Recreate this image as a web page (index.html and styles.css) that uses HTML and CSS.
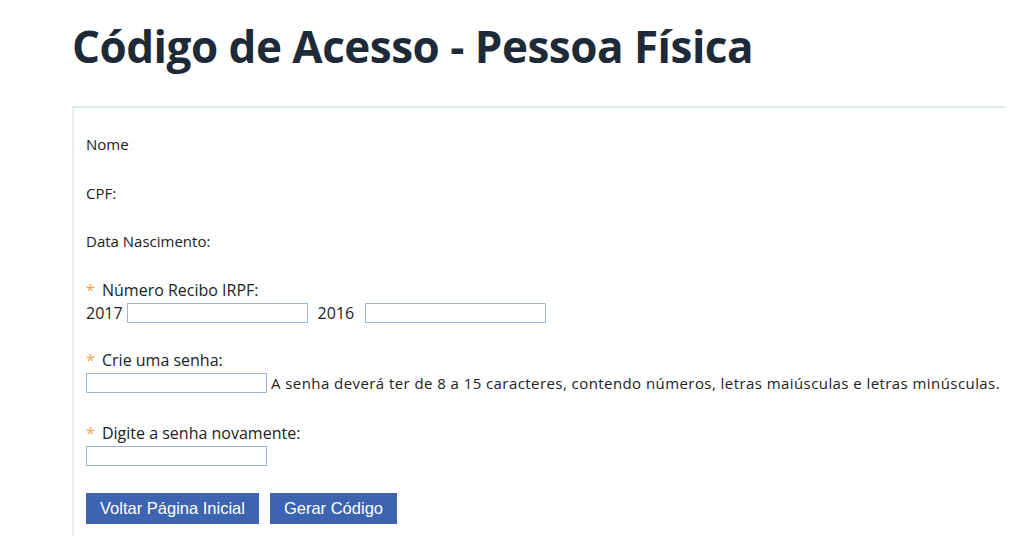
FILE: index.html
```html
<!DOCTYPE html>
<html lang="pt-BR">
<head>
  <meta charset="UTF-8">
  <title>Código de Acesso - Pessoa Física</title>
  <link rel="stylesheet" href="styles.css">
</head>
<body>
  <h1>Código de Acesso - Pessoa Física</h1>

  <form class="painel" id="formCodigo">
    <div class="info">Nome<span class="oculto">:</span></div>
    <div class="info">CPF: <span class="oculto">·</span></div>
    <div class="info">Data Nascimento:</div>

    <div class="campo">
      <label><span class="obrig">*</span> Número Recibo IRPF:</label>
      <div class="linha">
        <span>2017</span>
        <input type="text" id="recibo2017" class="caixa">
        <span class="ano">2016</span>
        <input type="text" id="recibo2016" class="caixa">
      </div>
    </div>

    <div class="campo largo">
      <label><span class="obrig">*</span> Crie uma senha:</label>
      <div class="linha">
        <input type="password" id="senha" class="caixa senha">
        <span class="dica">A senha deverá ter de 8 a 15 caracteres, contendo números, letras maiúsculas e letras minúsculas.</span>
      </div>
    </div>

    <div class="campo">
      <label><span class="obrig">*</span> Digite a senha novamente:</label>
      <div class="linha">
        <input type="password" id="senha2" class="caixa senha">
      </div>
    </div>

    <div class="botoes">
      <button type="button">Voltar Página Inicial</button>
      <button type="submit">Gerar Código</button>
    </div>
  </form>
</body>
</html>
```

FILE: styles.css
```css
body {
  margin: 0;
  background: #fff;
  font-family: "Open Sans", Arial, sans-serif;
  color: #222;
}

h1 {
  margin: 0;
  padding: 16px 0 0 72px;
  height: 90px;
  box-sizing: border-box;
  font-size: 44px;
  font-weight: 700;
  letter-spacing: -0.5px;
  color: #1e2a38;
}

.painel {
  margin: 16px 0 0 72px;
  width: 933px;
  height: 430px;
  box-sizing: border-box;
  border-top: 2px solid #dcebec;
  border-left: 2px solid #e8eeee;
  padding: 26px 0 0 12px;
  font-size: 15px;
}

.info {
  height: 20px;
  line-height: 20px;
  margin-bottom: 28.5px;
}

.oculto {
  color: #f0f0f0;
}

.campo {
  margin-bottom: 24px;
  font-size: 16px;
}

.campo.largo {
  margin-bottom: 27px;
}

.campo label {
  display: block;
  height: 20px;
  line-height: 20px;
}

.obrig {
  color: #f3a24c;
  margin-right: 3px;
}

.linha {
  display: flex;
  align-items: center;
  height: 26px;
}

.caixa {
  width: 181px;
  height: 20px;
  box-sizing: border-box;
  border: 1px solid #95b9d6;
  margin: 0 0 0 4px;
  padding: 2px 4px;
}

.ano {
  margin: 0 7px 0 10px;
}

.senha {
  margin-left: 0;
}

.dica {
  margin-left: 4px;
  font-size: 15px;
  letter-spacing: 0.43px;
  white-space: nowrap;
}

.botoes {
  display: flex;
  gap: 11px;
}

button {
  height: 31px;
  padding: 0 14px;
  border: none;
  background: #3c64b1;
  color: #fff;
  font-family: "Liberation Sans", Arial, sans-serif;
  font-size: 16.5px;
  cursor: pointer;
}
```
